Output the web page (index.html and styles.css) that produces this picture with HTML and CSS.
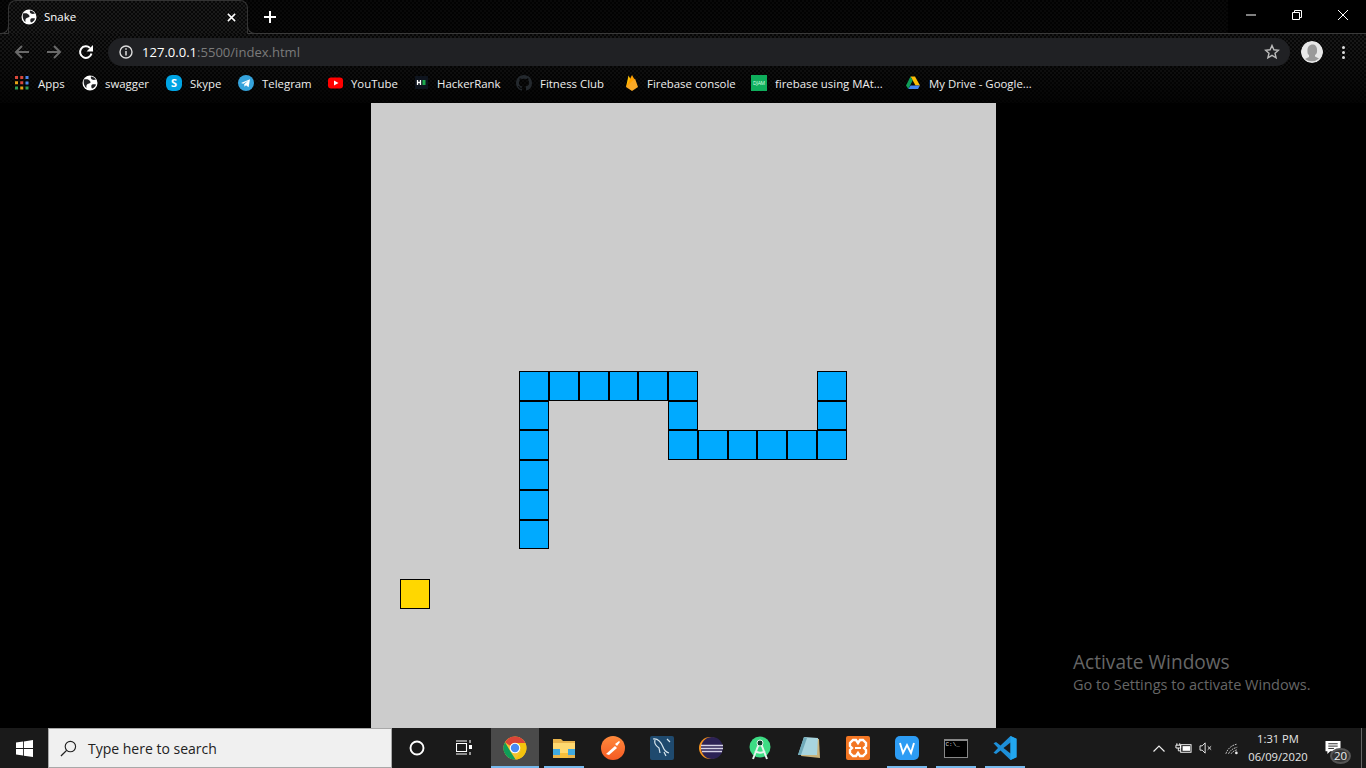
FILE: index.html
```html
<!DOCTYPE html>
<html lang="en">
<head>
<meta charset="utf-8">
<title>Snake</title>
<link rel="stylesheet" href="styles.css">
</head>
<body>
<div class="screen">
  <header class="browser">
    <div class="tabstrip">
      <div class="tab">
        <svg class="ico16" viewBox="0 0 16 16"><circle cx="8" cy="8" r="7.5" fill="#fff"/><path d="M2 4.500c2.500-.5 4-.5 5.500 1S9 8 7 8.500 4 10 4.500 13C3 12 1 9 2 4.500zM9 1.500c2 0 4 1.500 5 3-1.500.500-3 .500-4 0S8.500 2.500 9 1.500zM10 9.500c1.500-.500 3-.500 4 0-.5 2-2 3.500-4 4-1-1.500-1-3 0-4z" fill="#202124"/></svg>
        <span class="tab-title">Snake</span>
        <svg class="tab-close" viewBox="0 0 10 10"><path d="M1 1l8 8M9 1l-8 8" stroke="#fff" stroke-width="1.700"/></svg>
      </div>
      <svg class="new-tab" viewBox="0 0 12 12"><path d="M6 0v12M0 6h12" stroke="#fff" stroke-width="2"/></svg>
      <div class="win-controls">
        <div class="win-btn"><svg class="win-ico" viewBox="0 0 10 10"><path d="M0 5h10" stroke="#fff"/></svg></div>
        <div class="win-btn"><svg class="win-ico" viewBox="0 0 10 10"><path d="M.5 2.500h7v7h-7zM2.500 2.500v-2h7v7h-2" fill="none" stroke="#fff"/></svg></div>
        <div class="win-btn"><svg class="win-ico" viewBox="0 0 10 10"><path d="M0 0l10 10M10 0L0 10" stroke="#fff"/></svg></div>
      </div>
    </div>
    <div class="toolbar">
      <svg class="nav" viewBox="0 0 16 16"><path d="M15 8H2M8 2L2 8l6 6" fill="none" stroke="#6a6a6a" stroke-width="2"/></svg>
      <svg class="nav" viewBox="0 0 16 16"><path d="M1 8h13M8 2l6 6-6 6" fill="none" stroke="#6a6a6a" stroke-width="2"/></svg>
      <svg class="nav" viewBox="0 0 16 16"><path d="M13.500 9.500A5.800 5.800 0 1 1 12 4" fill="none" stroke="#fff" stroke-width="2"/><path d="M15 1v6.500H8.500z" fill="#fff"/></svg>
      <div class="omnibox">
        <svg class="ico14" viewBox="0 0 14 14"><circle cx="7" cy="7" r="6" fill="none" stroke="#ddd" stroke-width="1.400"/><path d="M7 6v4.500M7 3.300v1.500" stroke="#ddd" stroke-width="1.500"/></svg>
        <div class="url"><span class="url-host">127.0.0.1</span><span class="url-rest">:5500/index.html</span></div>
        <svg class="star" viewBox="0 0 16 16"><path d="M8 1.500l1.900 4.300 4.600.4-3.500 3 1.100 4.600L8 11.400l-4.100 2.400L5 9.200l-3.500-3 4.600-.4z" fill="none" stroke="#bbb" stroke-width="1.400"/></svg>
      </div>
      <div class="avatar">
        <svg viewBox="0 0 22 22"><circle cx="11" cy="11" r="11" fill="#e8e8e8"/><path d="M6.500 11c-.5-5 2-7.500 5-7.500s5 2.500 4.500 7c0 2-1 3-2 3.500v1.500l4 2A11 11 0 0 1 4 18l4-2v-2c-1-.5-1.500-1.500-1.500-3z" fill="#9a9a9a"/></svg>
      </div>
      <div class="menu-dots"><i></i><i></i><i></i></div>
    </div>
    <nav class="bookmarks">
      <div class="bm">
        <svg class="ico14" viewBox="0 0 14 14"><g fill="#d9473a"><rect width="3" height="3"/><rect x="10.500" y="5.500" width="3" height="3" fill="#4a87ee"/><rect x="5.250" width="3" height="3"/></g><rect x="10.500" width="3" height="3" fill="#4a87ee"/><rect y="5.250" width="3" height="3" fill="#e8a317"/><rect x="5.250" y="5.250" width="3" height="3" fill="#d9473a"/><rect y="10.500" width="3" height="3" fill="#2f9e54"/><rect x="5.250" y="10.500" width="3" height="3" fill="#e8a317"/><rect x="10.500" y="10.500" width="3" height="3" fill="#2f9e54"/></svg>
        <span>Apps</span>
      </div>
      <div class="bm">
        <svg class="ico16" viewBox="0 0 16 16"><circle cx="8" cy="8" r="7.500" fill="#fff"/><path d="M2 4.500c2.500-.5 4-.5 5.500 1S9 8 7 8.500 4 10 4.500 13C3 12 1 9 2 4.500zM9 1.500c2 0 4 1.500 5 3-1.500.500-3 .500-4 0S8.500 2.500 9 1.500zM10 9.500c1.500-.500 3-.500 4 0-.5 2-2 3.500-4 4-1-1.500-1-3 0-4z" fill="#202124"/></svg>
        <span>swagger</span>
      </div>
      <div class="bm far">
        <div class="skype">S</div>
        <span>Skype</span>
      </div>
      <div class="bm far">
        <svg class="ico16" viewBox="0 0 16 16"><circle cx="8" cy="8" r="8" fill="#35a3dc"/><path d="M3 8l9-3.700-1.400 8-2.600-2-1.500 1.500-.3-2.500 4-3.600-5 3.100z" fill="#fff"/></svg>
        <span>Telegram</span>
      </div>
      <div class="bm">
        <svg class="ico16" viewBox="0 0 16 16"><rect y="2.500" width="15" height="11" rx="3" fill="#f00"/><path d="M6 5.500v5l4.500-2.500z" fill="#fff"/></svg>
        <span>YouTube</span>
      </div>
      <div class="bm">
        <svg class="ico16" viewBox="0 0 16 16"><rect x="1" y="1" width="13" height="13" fill="#0e141e"/><path d="M3.500 5v5M6.500 5v5M3.500 7.500h3" stroke="#fff" stroke-width="1.300"/><rect x="8.500" y="5" width="3" height="5" fill="#1ba94c"/></svg>
        <span>HackerRank</span>
      </div>
      <div class="bm far">
        <svg class="ico16" viewBox="0 0 16 16"><path fill="#24292e" d="M8 0C3.580 0 0 3.580 0 8c0 3.540 2.290 6.530 5.470 7.590.4.070.55-.17.55-.38 0-.19-.01-.82-.01-1.490-2.010.37-2.530-.49-2.690-.94-.09-.23-.48-.94-.82-1.130-.28-.15-.68-.52-.01-.53.63-.01 1.080.58 1.230.82.720 1.210 1.870.87 2.330.66.070-.52.280-.87.510-1.070-1.780-.2-3.640-.89-3.640-3.950 0-.87.310-1.590.820-2.150-.08-.2-.36-1.020.080-2.120 0 0 .67-.21 2.200.82.640-.18 1.320-.27 2-.27.680 0 1.360.090 2 .27 1.530-1.040 2.200-.82 2.200-.82.440 1.100.160 1.920.080 2.120.510.560.820 1.270.820 2.150 0 3.070-1.870 3.750-3.650 3.950.290.250.540.730.540 1.480 0 1.070-.01 1.930-.01 2.200 0 .210.150.460.550.380A8.013 8.013 0 0 0 16 8c0-4.420-3.580-8-8-8z"/></svg>
        <span>Fitness Club</span>
      </div>
      <div class="bm">
        <svg class="ico16" viewBox="0 0 16 16"><path d="M2 12L4.500.500l3 5.500L6 8z" fill="#ffc107"/><path d="M8 0l2.500 4.500L6 12 2 12z" fill="#ffa000"/><path d="M11 3.500L14 12l-6 4-6-4z" fill="#f9a825"/></svg>
        <span>Firebase console</span>
      </div>
      <div class="bm">
        <div class="djam">DJAM</div>
        <span>firebase using MAt...</span>
      </div>
      <div class="bm far">
        <svg class="ico16" viewBox="0 0 16 16"><path d="M5.500 1.500h4.500l5 9h-4.500z" fill="#fbbc04"/><path d="M5.500 1.500l2.200 4L3.300 14 1 10.500z" fill="#0f9d58"/><path d="M3.300 14l2.300-3.500h9.400L13 14z" fill="#4285f4"/></svg>
        <span>My Drive - Google...</span>
      </div>
    </nav>
  </header>

  <main class="page">
    <div class="board">
      <div class="cell snake" style="grid-area:10/16"></div>
      <div class="cell snake" style="grid-area:11/16"></div>
      <div class="cell snake" style="grid-area:12/16"></div>
      <div class="cell snake" style="grid-area:12/15"></div>
      <div class="cell snake" style="grid-area:12/14"></div>
      <div class="cell snake" style="grid-area:12/13"></div>
      <div class="cell snake" style="grid-area:12/12"></div>
      <div class="cell snake" style="grid-area:12/11"></div>
      <div class="cell snake" style="grid-area:11/11"></div>
      <div class="cell snake" style="grid-area:10/11"></div>
      <div class="cell snake" style="grid-area:10/10"></div>
      <div class="cell snake" style="grid-area:10/9"></div>
      <div class="cell snake" style="grid-area:10/8"></div>
      <div class="cell snake" style="grid-area:10/7"></div>
      <div class="cell snake" style="grid-area:10/6"></div>
      <div class="cell snake" style="grid-area:11/6"></div>
      <div class="cell snake" style="grid-area:12/6"></div>
      <div class="cell snake" style="grid-area:13/6"></div>
      <div class="cell snake" style="grid-area:14/6"></div>
      <div class="cell snake" style="grid-area:15/6"></div>
      <div class="cell food" style="grid-area:17/2"></div>
    </div>
    <div class="activate">
      <div class="activate-title">Activate Windows</div>
      <div class="activate-sub">Go to Settings to activate Windows.</div>
    </div>
  </main>

  <footer class="taskbar">
    <div class="start">
      <svg class="winlogo" viewBox="0 0 18 18"><path d="M0 2.700l7.400-1v6.900H0zM8.300 1.500L18 0v8.600H8.300zM0 9.500h7.400v6.900l-7.400-1zM8.300 9.500H18V18l-9.700-1.400z" fill="#fff"/></svg>
    </div>
    <div class="search">
      <svg class="search-ico" viewBox="0 0 18 18"><circle cx="11" cy="7" r="5.500" fill="none" stroke="#222" stroke-width="1.200"/><path d="M7 11l-6 6" stroke="#222" stroke-width="1.400"/></svg>
      <span>Type here to search</span>
    </div>
    <div class="task-tool">
      <svg class="tool-ico" viewBox="0 0 16 16"><circle cx="8" cy="8" r="6.500" fill="none" stroke="#fff" stroke-width="1.900"/></svg>
    </div>
    <div class="task-tool view">
      <svg class="view-ico" viewBox="0 0 16 16"><path d="M.5 3.500h10v8H.5zM0 1h11M0 14h11M14 0v3M14 12v3" fill="none" stroke="#fff" stroke-width="1.100"/><rect x="13" y="5" width="3" height="4" fill="#fff"/></svg>
    </div>
    <div class="apps">
      <div class="app active">
        <svg class="app-ico" viewBox="0 0 24 24"><circle cx="12" cy="12" r="11.500" fill="#f1c232"/><path d="M2 6.200A11.500 11.500 0 0 1 22.300 6.900L12 7a5 5 0 0 0-4.600 3z" fill="#db4437"/><path d="M2 6.200l5.400 9.300 5.200 8A11.500 11.500 0 0 1 2 6.200z" fill="#0f9d58"/><path d="M12 7h10.300a11.500 11.500 0 0 1-9.700 16.500l5.600-9z" fill="#f4c20d"/><circle cx="12" cy="12" r="5.300" fill="#fff"/><circle cx="12" cy="12" r="4.200" fill="#4a8af4"/></svg>
      </div>
      <div class="app open">
        <svg class="app-ico" viewBox="0 0 24 24"><path d="M1 3h8l2 2h12v17H1z" fill="#e9b44c"/><rect x="1" y="7" width="22" height="15" fill="#ffd970"/><rect x="1" y="13" width="22" height="9" fill="#3fa9e0"/><rect x="8" y="13" width="8" height="4" fill="#ffd970"/><rect x="1" y="19" width="22" height="3" fill="#e9b44c"/><rect x="8" y="17" width="8" height="5" fill="#f6bf3c"/></svg>
      </div>
      <div class="app">
        <svg class="app-ico" viewBox="0 0 24 24"><defs><linearGradient id="pm" x1="0" y1="0" x2="0" y2="1"><stop offset="0" stop-color="#ff8a3c"/><stop offset="1" stop-color="#f55a24"/></linearGradient></defs><circle cx="12" cy="12" r="12" fill="url(#pm)"/><path d="M5 18l9-8 2 2-8 7zM14 8l4-3 1 1-3 4z" fill="#fff"/></svg>
      </div>
      <div class="app">
        <svg class="app-ico" viewBox="0 0 24 24"><rect width="24" height="24" rx="2" fill="#1f4a6e"/><path d="M3 3c5-1 8 3 10 8 1 3 3 5 6 6M5 4c-1 3 1 6 4 8l1 5M14 16l2 4M17 3l3 3" fill="none" stroke="#d8e6ee" stroke-width="1.200"/></svg>
      </div>
      <div class="app">
        <svg class="app-ico" viewBox="0 0 24 24"><circle cx="11" cy="12" r="11" fill="#f7941e"/><circle cx="13" cy="12" r="11" fill="#2c2255"/><path d="M2 9.500h22M2 12.500h22M3 15.500h20" stroke="#d6d3e6" stroke-width="1.500"/></svg>
      </div>
      <div class="app">
        <svg class="app-ico" viewBox="0 0 24 24"><circle cx="12" cy="11" r="10.500" fill="#3ddc84"/><path d="M12 5L5 23M12 5l7 18M7 15c3 2 7 2 10 0" fill="none" stroke="#e8f3ee" stroke-width="2"/><circle cx="12" cy="7" r="3" fill="#0d3c2a" stroke="#e8f3ee"/></svg>
      </div>
      <div class="app">
        <svg class="app-ico" viewBox="0 0 24 24"><path d="M7 2l15 1 1 19-19-2z" fill="#c9b37a"/><path d="M7 1l14 1-1 17H1z" fill="#a8d5de"/><path d="M7 1l3 1-6 17H1z" fill="#6fa9b8"/></svg>
      </div>
      <div class="app">
        <svg class="app-ico" viewBox="0 0 24 24"><rect width="24" height="24" rx="2" fill="#f37623"/><path d="M7 4h3l2 3 2-3h3l3 3v3l-2 2 2 2v3l-3 3h-3l-2-3-2 3H7l-3-3v-3l2-2-2-2V7z" fill="none" stroke="#fff" stroke-width="2.400"/><path d="M9 12h6" stroke="#fff" stroke-width="2"/></svg>
      </div>
      <div class="app open">
        <svg class="app-ico" viewBox="0 0 24 24"><rect width="24" height="24" rx="5" fill="#2d9cf4"/><path d="M5 7l3 10 4-8 4 8 3-10" fill="none" stroke="#fff" stroke-width="1.900"/></svg>
      </div>
      <div class="app open">
        <div class="cmd"><span>C:\_</span></div>
      </div>
      <div class="app open">
        <svg class="app-ico" viewBox="0 0 24 24"><path d="M17.500 0L23.500 2.800V21.200L17.500 24 7.500 14.500 3 18 .5 16.700 5 12 .5 7.300 3 6l4.500 3.500z" fill="#1e8fd8"/><path d="M17.500 6.500L10.500 12l7 5.500z" fill="#1a1a1a"/><path d="M17.500 0l6 2.800v18.400l-6 2.800z" fill="#22a7f0"/></svg>
      </div>
    </div>
    <div class="tray">
      <svg class="tray-chevron" viewBox="0 0 12 7"><path d="M.5 6.500L6 1l5.500 5.500" fill="none" stroke="#eee" stroke-width="1.200"/></svg>
      <svg class="tray-battery" viewBox="0 0 18 12"><path d="M2 1v2M5 1v2M1 3h5v3H1zM3.500 6v3h2" fill="none" stroke="#fff"/><rect x="6" y="2.500" width="11" height="8" fill="none" stroke="#fff"/><rect x="8" y="4" width="8" height="5" fill="#fff"/></svg>
      <svg class="tray-volume" viewBox="0 0 16 14"><path d="M1 4.500h2.500L7 1v12L3.500 9.500H1z" fill="none" stroke="#eee" stroke-width="1.100"/><path d="M10 5l4 4M14 5l-4 4" stroke="#eee" stroke-width="1.100"/></svg>
      <svg class="tray-wifi" viewBox="0 0 16 14"><path d="M1 13C3 7 8 3 14 2M4 13c2-4 5-6 10-7.500M7 13c1-2 4-4 7-4.500" fill="none" stroke="#ccc" stroke-width="1.100" stroke-dasharray="2 1"/><circle cx="13" cy="12" r="1.500" fill="#eee"/></svg>
      <div class="clock"><div>1:31 PM</div><div>06/09/2020</div></div>
      <div class="notify">
        <svg class="notify-ico" viewBox="0 0 16 16"><path d="M0 1h16v11H5l-3 3v-3H0z" fill="#fff"/><path d="M3 4h10M3 6.500h10M3 9h6" stroke="#222"/></svg>
        <div class="badge">20</div>
      </div>
      <div class="show-desktop"></div>
    </div>
  </footer>
</div>
</body>
</html>
```

FILE: styles.css
```css
* { box-sizing: border-box; }
html, body { margin: 0; height: 100%; background: #000; overflow: hidden; }
.screen { width: 1366px; height: 768px; display: flex; flex-direction: column; font-family: "Open Sans", "Noto Sans", sans-serif; }
svg { display: block; flex: none; }
.ico16 { width: 16px; height: 16px; }
.ico14 { width: 14px; height: 14px; }

.browser { height: 103px; flex: none; display: flex; flex-direction: column; color: #fff;
  background: linear-gradient(#0000 40%, #000c 100%), repeating-conic-gradient(#171717 0 25%, #060606 0 50%) 0 0 / 4px 4px; }
.tabstrip { height: 34px; flex: none; display: flex; align-items: center; padding-left: 8px; border-bottom: 1px solid #3a3a3a;
  background: #0009; }
.tab { width: 240px; height: 34px; align-self: flex-start; position: relative; display: flex; align-items: center; padding: 0 11px 2px 12px;
  border: 1px solid #333; border-bottom: 0; border-radius: 8px 8px 0 0;
  background: repeating-conic-gradient(#1a1a1a 0 25%, #080808 0 50%) 0 0 / 4px 4px; }
.tab::before, .tab::after { content: ""; position: absolute; bottom: 0; width: 8px; height: 8px; border-bottom: 1px solid #3a3a3a; }
.tab::before { left: -9px; border-right: 1px solid #3a3a3a; border-bottom-right-radius: 8px; background: #050505; }
.tab::after { right: -9px; border-left: 1px solid #3a3a3a; border-bottom-left-radius: 8px; background: #050505; }
.tab-title { margin-left: 7px; font-size: 11.500px; flex: 1; }
.tab-close { width: 9px; height: 9px; margin-top: 1px; }
.new-tab { width: 12px; height: 12px; margin-left: 16px; margin-top: 1px; }
.win-controls { margin-left: auto; height: 33px; display: flex; align-self: flex-start; background: #000; }
.win-btn { width: 46px; height: 29px; display: flex; align-items: center; justify-content: center; }
.win-ico { width: 10px; height: 10px; }

.toolbar { height: 36px; flex: none; display: flex; align-items: center; padding-left: 14px; }
.nav { width: 16px; height: 16px; margin-right: 16px; }
.omnibox { width: 1182px; height: 28px; margin-left: -2px; border-radius: 14px; background: #202124; display: flex; align-items: center; padding-left: 11px; padding-right: 10px; }
.url { margin-left: 9px; font-size: 13.050px; flex: 1; }
.url-host { color: #fff; }
.url-rest { color: #7b7b7b; }
.star { width: 16px; height: 16px; }
.avatar { width: 22px; height: 22px; margin-left: 11px; border-radius: 50%; overflow: hidden; }
.avatar svg { width: 22px; height: 22px; }
.menu-dots { margin-left: 19px; display: flex; flex-direction: column; gap: 2px; }
.menu-dots i { width: 3px; height: 3px; border-radius: 50%; background: #ddd; display: block; }

.bookmarks { height: 33px; flex: none; display: grid; align-items: center; padding-left: 15px; padding-bottom: 7px;
  grid-template-columns: 67px 84px 72px 90px 86px 102px 108px 127px 154px auto; }
.bm { display: flex; align-items: center; gap: 7px; font-size: 11.400px; color: #eee; white-space: nowrap; }
.bm.far { gap: 8px; }
.bm:first-child { gap: 9px; }
.skype { width: 16px; height: 16px; border-radius: 6px; background: #00a4e4; color: #fff; font-size: 11px; font-weight: 700; text-align: center; line-height: 16px; }
.djam { width: 16px; height: 16px; margin-right: 1px; background: #0fae5c; color: #d7ffe6; font-size: 5px; line-height: 16px; text-align: center; overflow: hidden; letter-spacing: -.2px; }

.page { flex: 1; min-height: 0; position: relative; display: flex; justify-content: center; background: #000; }
.board { width: 625px; height: 625px; flex: none; background: #ccc; display: grid;
  grid-template-columns: repeat(21, 1fr); grid-template-rows: repeat(21, 1fr); }
.cell { border: 1px solid #000; }
.snake { background: #00aaff; }
.food { background: #ffd700; }
.activate { position: absolute; left: 1073px; top: 546px; color: #666; white-space: nowrap; }
.activate-title { font-size: 19.100px; line-height: 26px; }
.activate-sub { font-size: 14.500px; line-height: 20px; }

.taskbar { height: 40px; flex: none; display: flex; background: #1a1a1a; color: #fff; }
.start { width: 48px; display: flex; align-items: center; justify-content: center; }
.winlogo { width: 17px; height: 17px; }
.search { width: 344px; background: #f0f0f0; border: 1px solid #a8a8a8; display: flex; align-items: center; padding-left: 11px; color: #222; font-size: 14px; }
.search-ico { width: 17px; height: 17px; margin-right: 11px; }
.task-tool { width: 49px; display: flex; align-items: center; justify-content: center; }
.task-tool.view { width: 50px; }
.tool-ico { width: 16px; height: 16px; }
.view-ico { width: 16px; height: 16px; margin-right: 4px; }
.apps { display: flex; }
.app { width: 49px; height: 40px; display: flex; align-items: center; justify-content: center; position: relative; }
.app-ico { width: 24px; height: 24px; }
.app.active { width: 48px; background: #4a4a4a; }
.app.active::after, .app.open::after { content: ""; position: absolute; bottom: 0; height: 2px; background: #76b9ed; left: 5px; right: 4px; }
.app.active::after { left: 0; right: 0; }
.cmd { width: 24px; height: 19px; background: #000; border: 1px solid #888; border-top-width: 2px; font-family: "Liberation Mono", monospace; font-size: 6px; line-height: 8px; padding-left: 1px; color: #ddd; }
.tray { margin-left: auto; display: flex; align-items: center; width: 213px; position: relative; }
.tray-chevron { width: 12px; height: 7px; }
.tray-battery { width: 17px; height: 12px; margin-left: 10px; }
.tray-volume { width: 14px; height: 12px; margin-left: 7px; }
.tray-wifi { width: 14px; height: 13px; margin-left: 12px; }
.clock { width: 70px; margin-left: 4px; text-align: center; font-size: 11.200px; line-height: 18px; color: #e6e6e6; }
.notify { width: 28px; height: 28px; margin-left: 10px; position: relative; }
.notify-ico { width: 16px; height: 15px; position: absolute; left: 2px; top: 6px; }
.badge { position: absolute; left: 7px; top: 14px; width: 21px; height: 16px; border-radius: 50%; background: #333; border: 2px solid #555; font-size: 11.500px; line-height: 12px; text-align: center; color: #eee; }
.show-desktop { position: absolute; right: 4px; top: 0; bottom: 0; width: 1px; background: #666; }
```
